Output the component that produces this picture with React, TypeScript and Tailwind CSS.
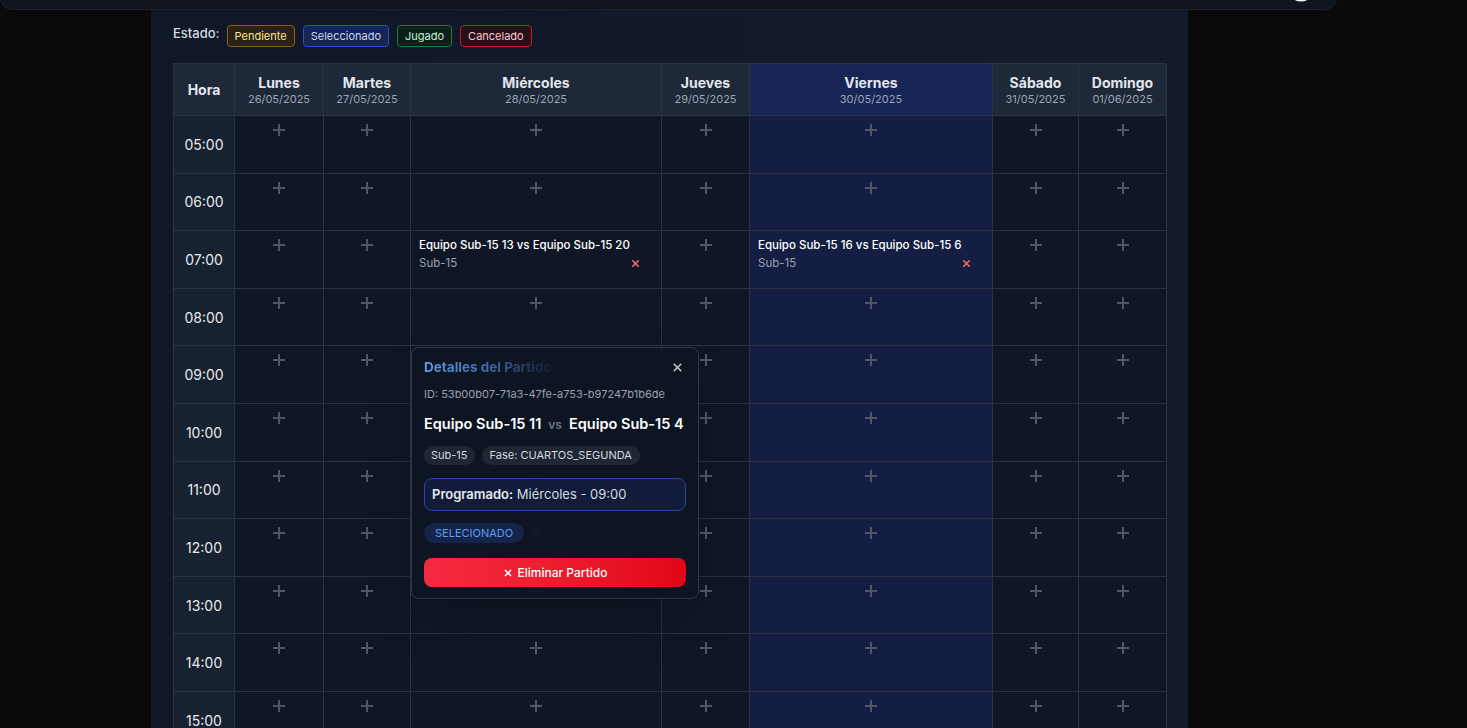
import { X } from "lucide-react";

const font = { fontFamily: "Inter, 'Noto Sans', sans-serif" };

type Dia = { nombre: string; fecha: string; ancho: string; hoy?: boolean };

const dias: Dia[] = [
  { nombre: "Lunes", fecha: "26/05/2025", ancho: "w-[89px]" },
  { nombre: "Martes", fecha: "27/05/2025", ancho: "w-[87px]" },
  { nombre: "Miércoles", fecha: "28/05/2025", ancho: "w-[251px]" },
  { nombre: "Jueves", fecha: "29/05/2025", ancho: "w-[88px]" },
  { nombre: "Viernes", fecha: "30/05/2025", ancho: "w-[243px]", hoy: true },
  { nombre: "Sábado", fecha: "31/05/2025", ancho: "w-[86px]" },
  { nombre: "Domingo", fecha: "01/06/2025", ancho: "w-[88px]" },
];

const horas = Array.from({ length: 18 }, (_, i) => `${String(i + 5).padStart(2, "0")}:00`);

// partidos por "dia-hora"
const partidos: Record<string, { local: string; visita: string; cat: string }> = {
  "Miércoles-07:00": { local: "Equipo Sub-15 13", visita: "Equipo Sub-15 20", cat: "Sub-15" },
  "Viernes-07:00": { local: "Equipo Sub-15 16", visita: "Equipo Sub-15 6", cat: "Sub-15" },
};

const estados = [
  { label: "Pendiente", cls: "border-[#8d5f1f] bg-[#2a2117] text-[#fde68a]" },
  { label: "Seleccionado", cls: "border-[#2550c8] bg-[#172552] text-[#c7d7fb]" },
  { label: "Jugado", cls: "border-[#17803f] bg-[#0d1f18] text-[#c3f5d3]" },
  { label: "Cancelado", cls: "border-[#b51d2a] bg-[#2b1019] text-[#fbc9cf]" },
];

function Mas() {
  return (
    <svg width="12" height="12" viewBox="0 0 12 12" className="text-[#4d5767]">
      <rect x="0" y="5" width="12" height="2" fill="currentColor" />
      <rect x="5" y="0" width="2" height="12" fill="currentColor" />
    </svg>
  );
}

function Celda({ dia, hora }: { dia: Dia; hora: string }) {
  const p = partidos[`${dia.nombre}-${hora}`];
  const vacia = dia.nombre === "Miércoles" && hora === "09:00";
  return (
    <div
      className={`h-[57.6px] shrink-0 border-r border-b border-[#2a3343] ${dia.ancho} ${
        dia.hoy ? "bg-[#131e42]" : "bg-[#0f1625]"
      }`}
    >
      {p ? (
        <div className="flex h-full flex-col px-[8px] pt-[6px]">
          <p className="text-[11.5px] font-medium leading-4 text-white whitespace-nowrap">
            {p.local} vs {p.visita}
          </p>
          <div className="mt-[2px] flex items-center justify-between pr-[12px]">
            <span className="text-[11.5px] leading-4 text-[#9aa3b2]">{p.cat}</span>
            <X size={11} strokeWidth={3.5} className="text-[#f26b6b]" />
          </div>
        </div>
      ) : vacia ? null : (
        <div className="flex justify-center pt-[8px]">
          <Mas />
        </div>
      )}
    </div>
  );
}

function Detalle() {
  return (
    <div className="absolute left-[237px] top-[283px] w-[288px] rounded-lg border border-[#2f3847] bg-[#0f1522]/[0.94] px-3 pt-[9px] pb-[11px] shadow-2xl">
      <div className="flex items-center justify-between">
        <h3 className="bg-linear-to-r from-[#5d9af0] via-[#3f6cb0] to-[#141b2b] bg-clip-text text-[13.5px] font-bold leading-5 text-transparent">
          Detalles del Partido
        </h3>
        <X size={13} strokeWidth={3} className="mr-[2px] text-[#c4c9d1]" />
      </div>
      <p className="mt-[9px] text-[11px] leading-4 text-[#9aa1ad]">
        ID: 53b00b07-71a3-47fe-a753-b97247b1b6de
      </p>
      <div className="mt-3 flex items-baseline gap-[7px] whitespace-nowrap leading-5">
        <span className="text-[14.5px] font-semibold text-white">Equipo Sub-15 11</span>
        <span className="text-[12px] font-semibold text-[#6b7584]">vs</span>
        <span className="text-[14.5px] font-semibold text-white">Equipo Sub-15 4</span>
      </div>
      <div className="mt-[11px] flex gap-[7px]">
        <span className="rounded-full bg-[#1f2734] px-[7px] text-[11px] leading-[19px] text-[#d3d7de]">Sub-15</span>
        <span className="rounded-full bg-[#1f2734] px-[8px] text-[11px] leading-[19px] text-[#d3d7de]">
          Fase: CUARTOS_SEGUNDA
        </span>
      </div>
      <div className="mt-[13px] rounded-lg border border-[#2446a5] bg-[#121c3a] px-[7px] py-[7px] text-[13px] leading-[17px] text-[#d6dae1]">
        <span className="font-semibold text-[#e5e8ee]">Programado:</span> Miércoles - 09:00
      </div>
      <span className="mt-3 inline-block rounded-full bg-[#152449] px-[11px] text-[11px] leading-5 text-[#5f9cf0]">
        SELECIONADO
      </span>
      <button className="mt-[15px] flex h-[29px] w-full items-center justify-center gap-[5px] rounded-lg bg-linear-to-r from-[#f52a40] to-[#e10616] text-[12px] font-medium text-white">
        <X size={10} strokeWidth={4} />
        Eliminar Partido
      </button>
    </div>
  );
}

export default function App() {
  return (
    <div className="h-[728px] overflow-hidden bg-[#0a0a0a] text-[#e5e7eb]" style={font}>
      {/* barra superior, casi fuera de vista */}
      <header className="-mt-[40px] flex h-[50px] w-[1337px] items-end justify-end rounded-xl border border-[#1d232d] bg-[#10141c] pr-[21px] pb-[7px]">
        <svg width="28" height="28" viewBox="0 0 28 28" fill="none">
          <circle cx="14" cy="14" r="12.5" stroke="#f3f4f6" strokeWidth="2" />
        </svg>
      </header>

      <main className="ml-[151px] h-full w-[1037px] bg-linear-to-r from-[#101726] to-[#131b2d] px-[22px] pt-[15px]">
        <div className="flex items-start gap-[7px]">
          <span className="text-[13px] font-medium leading-4 text-[#d5d9e0]">Estado:</span>
          <div className="flex gap-2">
            {estados.map((e) => (
              <span
                key={e.label}
                className={`h-[22px] rounded-[4px] border px-[7px] text-[11px] leading-[20px] ${e.cls}`}
              >
                {e.label}
              </span>
            ))}
          </div>
        </div>

        <div className="relative mt-4 w-[993px] border-t border-l border-[#2a3343]">
          <div className="flex">
            <div className="flex h-[52px] w-[61px] shrink-0 items-center justify-center border-r border-b border-[#2a3343] bg-[#1e2838] text-[14px] font-bold text-[#e2e6ec]">
              Hora
            </div>
            {dias.map((d) => (
              <div
                key={d.nombre}
                className={`flex h-[52px] shrink-0 flex-col items-center justify-center border-r border-b border-[#2a3343] ${d.ancho} ${
                  d.hoy ? "bg-[#172556]" : "bg-[#1e2838]"
                }`}
              >
                <span className="text-[14px] font-bold leading-[18px] text-[#e2e6ec]">{d.nombre}</span>
                <span className="text-[11px] leading-[14px] text-[#9ba4b3]">{d.fecha}</span>
              </div>
            ))}
          </div>

          {horas.map((h) => (
            <div key={h} className="flex">
              <div className="flex h-[57.6px] w-[61px] shrink-0 items-center justify-center border-r border-b border-[#2a3343] bg-[#182130] text-[14px] text-[#e6e9ee]">
                {h}
              </div>
              {dias.map((d) => (
                <Celda key={d.nombre} dia={d} hora={h} />
              ))}
            </div>
          ))}

          <Detalle />
        </div>
      </main>
    </div>
  );
}
